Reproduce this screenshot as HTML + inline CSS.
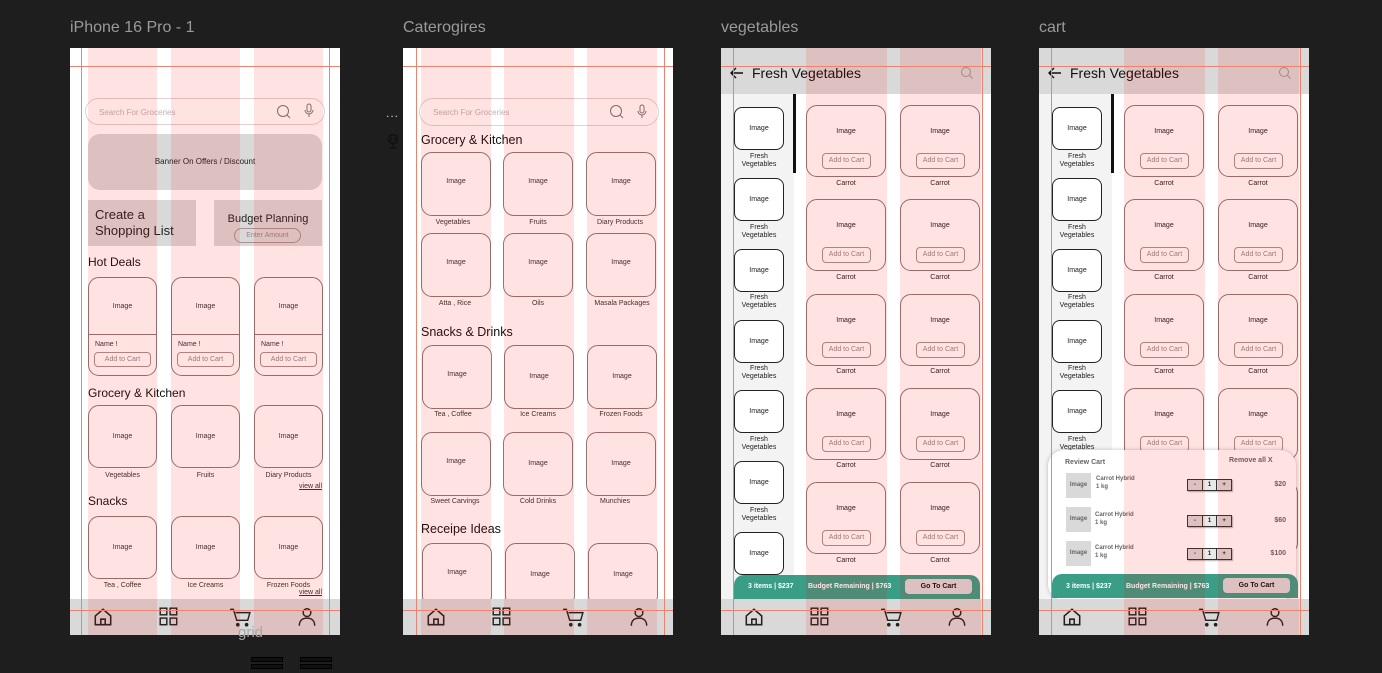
<!DOCTYPE html>
<html><head><meta charset="utf-8"><style>
*{margin:0;padding:0;box-sizing:border-box}
body{width:1382px;height:673px;background:#1e1e1e;position:relative;overflow:hidden;font-family:"Liberation Sans",sans-serif;color:#222}
.t{position:absolute;top:19px;font-size:16px;color:#9a9a9a}
.f{position:absolute;top:48px;width:270px;height:587px;background:#fff;overflow:hidden}
.a{position:absolute}
.col{position:absolute;top:0;height:587px;background:rgba(255,0,0,.11);z-index:20}
.vl{position:absolute;top:0;height:587px;width:1px;background:#ea8470;z-index:21}
.hl{position:absolute;left:0;width:270px;height:1px;background:#ea8470;z-index:21}
.card{position:absolute;border:1px solid #8e7676;border-radius:11px;font-size:7px;text-align:center;color:#333}
.lbl{position:absolute;font-size:7px;text-align:center;color:#333}
.h{position:absolute;font-size:12px;color:#111}
.pill{position:absolute;border:1px solid #aa9090;border-radius:4px;font-size:7px;color:#9a8585;text-align:center;line-height:13px}
.nav{position:absolute;left:0;top:551px;width:270px;height:36px;background:#d9d9d9;z-index:10}
.nav svg{position:absolute;top:9px;transform:scale(1.1)}
.sb{position:absolute;left:13px;width:50px;height:43px;border:1px solid #222;border-radius:8px;background:#fff;font-size:7px;text-align:center;line-height:42px}
.sbl{position:absolute;left:8px;width:60px;font-size:7px;text-align:center;line-height:8px}
.pc{position:absolute;width:80px;height:72px;border:1px solid #8e7676;border-radius:11px;font-size:7px;text-align:center}
.pc span{position:absolute;left:0;right:0;top:22px}
.pc i{position:absolute;left:15px;top:47px;width:49px;height:16px;border:1px solid #aa9090;border-radius:4px;font-style:normal;color:#9a8585;line-height:14px}
.pl{position:absolute;width:80px;font-size:7px;text-align:center}
.green{position:absolute;left:13px;top:527px;width:246px;height:24px;background:#3a9e86;border-radius:10px 10px 0 0;z-index:9;color:#fff;font-size:7px;font-weight:bold}
</style></head><body>
<div class="t" style="left:70px">iPhone 16 Pro - 1</div>
<div class="t" style="left:403px">Caterogires</div>
<div class="t" style="left:721px">vegetables</div>
<div class="t" style="left:1039px">cart</div>

<!-- FRAME 1 -->
<div class="f" style="left:70px">
<div class="col" style="left:18px;width:69px"></div><div class="col" style="left:101px;width:69px"></div><div class="col" style="left:184px;width:69px"></div>
<div class="vl" style="left:11px"></div><div class="vl" style="left:259px"></div>
<div class="hl" style="top:18px"></div><div class="hl" style="top:562px"></div>
<div class="a" style="left:15px;top:50px;width:240px;height:27px;border:1px solid #e3d0d0;border-radius:14px;font-size:8px;color:#c4b0b0;padding:9px 13px">Search For Groceries</div>
<svg class="a" style="left:206px;top:56px" width="16" height="16"><circle cx="7" cy="7" r="5.5" fill="none" stroke="#777" stroke-width="1"/><line x1="11" y1="11" x2="14" y2="14" stroke="#777"/></svg>
<svg class="a" style="left:234px;top:55px" width="10" height="16"><rect x="3" y="1" width="4" height="8" rx="2" fill="none" stroke="#777"/><path d="M1 7a4 4 0 0 0 8 0M5 11v3" fill="none" stroke="#777"/></svg>
<div class="a" style="left:18px;top:86px;width:234px;height:56px;background:#d9d9d9;border-radius:12px;font-size:8px;text-align:center;line-height:56px">Banner On Offers / Discount</div>
<div class="a" style="left:18px;top:152px;width:108px;height:46px;background:#d9d9d9;font-size:13px;padding:7px 7px;line-height:16px">Create a Shopping List</div>
<div class="a" style="left:144px;top:152px;width:108px;height:46px;background:#d9d9d9;font-size:11px;text-align:center;padding-top:13px">Budget Planning</div>
<div class="pill" style="left:164px;top:180px;width:67px;height:15px;border-radius:8px">Enter Amount</div>
<div class="h" style="left:18px;top:207px">Hot Deals</div>
<div class="card" style="left:18px;top:229px;width:69px;height:99px"><div class="a" style="left:0;right:0;top:25px">Image</div><div class="a" style="left:0;right:0;top:56px;border-top:1px solid #8e7676"></div><div class="a" style="left:6px;top:63px">Name !</div></div>
<div class="card" style="left:101px;top:229px;width:69px;height:99px"><div class="a" style="left:0;right:0;top:25px">Image</div><div class="a" style="left:0;right:0;top:56px;border-top:1px solid #8e7676"></div><div class="a" style="left:6px;top:63px">Name !</div></div>
<div class="card" style="left:184px;top:229px;width:69px;height:99px"><div class="a" style="left:0;right:0;top:25px">Image</div><div class="a" style="left:0;right:0;top:56px;border-top:1px solid #8e7676"></div><div class="a" style="left:6px;top:63px">Name !</div></div>
<div class="pill" style="left:24px;top:304px;width:57px;height:15px">Add to Cart</div>
<div class="pill" style="left:107px;top:304px;width:57px;height:15px">Add to Cart</div>
<div class="pill" style="left:190px;top:304px;width:57px;height:15px">Add to Cart</div>
<div class="h" style="left:18px;top:338px">Grocery &amp; Kitchen</div>
<div class="card" style="left:18px;top:357px;width:69px;height:63px;line-height:61px">Image</div>
<div class="card" style="left:101px;top:357px;width:69px;height:63px;line-height:61px">Image</div>
<div class="card" style="left:184px;top:357px;width:69px;height:63px;line-height:61px">Image</div>
<div class="lbl" style="left:18px;top:424px;width:69px">Vegetables</div>
<div class="lbl" style="left:101px;top:424px;width:69px">Fruits</div>
<div class="lbl" style="left:184px;top:424px;width:69px">Diary Products</div>
<div class="lbl" style="left:220px;top:435px;width:32px;text-decoration:underline;text-align:right">view all</div>
<div class="h" style="left:18px;top:446px">Snacks</div>
<div class="card" style="left:18px;top:468px;width:69px;height:63px;line-height:61px">Image</div>
<div class="card" style="left:101px;top:468px;width:69px;height:63px;line-height:61px">Image</div>
<div class="card" style="left:184px;top:468px;width:69px;height:63px;line-height:61px">Image</div>
<div class="lbl" style="left:18px;top:534px;width:69px">Tea , Coffee</div>
<div class="lbl" style="left:101px;top:534px;width:69px">Ice Creams</div>
<div class="lbl" style="left:184px;top:534px;width:69px">Frozen Foods</div>
<div class="lbl" style="left:220px;top:541px;width:32px;text-decoration:underline;text-align:right">view all</div>
<div class="nav">
<svg style="left:24px" width="18" height="18" fill="none" stroke="#222" stroke-width="1.4"><path d="M2 8L9 2l7 6v8H2z M7 16v-5h4v5"/></svg>
<svg style="left:90px" width="18" height="18" fill="none" stroke="#222" stroke-width="1.3"><rect x="1" y="1" width="6" height="6"/><rect x="10" y="1" width="6" height="6"/><rect x="1" y="10" width="6" height="6"/><rect x="10" y="10" width="6" height="6"/></svg>
<svg style="left:160px" width="20" height="18" fill="none" stroke="#222" stroke-width="1.3"><path d="M1 2h3l3 10h10l2-7H6"/><circle cx="8" cy="16" r="1" fill="#222"/><circle cx="16" cy="16" r="1" fill="#222"/></svg>
<svg style="left:228px" width="18" height="18" fill="none" stroke="#222" stroke-width="1.3"><circle cx="9" cy="5" r="3.5"/><path d="M2 17c0-5 3-7 7-7s7 2 7 7"/></svg>
</div>
</div>
<div class="a" style="left:238px;top:624px;font-size:15px;color:#a8a8a8;z-index:50">grid</div>
<div class="a" style="left:251px;top:657px;width:32px;height:5px;border:1px solid #000;background:#111"></div>
<div class="a" style="left:251px;top:664px;width:32px;height:5px;border:1px solid #000;background:#111"></div>
<div class="a" style="left:300px;top:657px;width:32px;height:5px;border:1px solid #000;background:#111"></div>
<div class="a" style="left:300px;top:664px;width:32px;height:5px;border:1px solid #000;background:#111"></div>
<div class="a" style="left:386px;top:106px;font-size:12px;color:#ccc;letter-spacing:1px">...</div>
<svg class="a" style="left:386px;top:133px" width="14" height="16" fill="none" stroke="#111" stroke-width="1.5"><circle cx="7" cy="6" r="4.5"/><path d="M7 11v4M3 15h8M5 4v4M9 4v4"/></svg>

<!-- FRAME 2 -->
<div class="f" style="left:403px">
<div class="col" style="left:18px;width:70px"></div><div class="col" style="left:101px;width:70px"></div><div class="col" style="left:184px;width:70px"></div>
<div class="vl" style="left:13px"></div><div class="vl" style="left:261px"></div>
<div class="hl" style="top:18px"></div><div class="hl" style="top:562px"></div>
<div class="a" style="left:16px;top:50px;width:240px;height:28px;border:1px solid #e3d0d0;border-radius:14px;font-size:8px;color:#c4b0b0;padding:9px 13px">Search For Groceries</div>
<svg class="a" style="left:206px;top:56px" width="16" height="16"><circle cx="7" cy="7" r="5.5" fill="none" stroke="#777"/><line x1="11" y1="11" x2="14" y2="14" stroke="#777"/></svg>
<svg class="a" style="left:234px;top:56px" width="10" height="16"><rect x="3" y="1" width="4" height="8" rx="2" fill="none" stroke="#777"/><path d="M1 7a4 4 0 0 0 8 0M5 11v3" fill="none" stroke="#777"/></svg>
<div class="h" style="left:18px;top:85px;font-size:12.5px">Grocery &amp; Kitchen</div>
<div class="card" style="left:18px;top:104px;width:70px;height:64px;line-height:58px">Image</div>
<div class="card" style="left:100px;top:104px;width:70px;height:64px;line-height:58px">Image</div>
<div class="card" style="left:183px;top:104px;width:70px;height:64px;line-height:58px">Image</div>
<div class="lbl" style="left:10px;top:171px;width:80px">Vegetables</div>
<div class="lbl" style="left:95px;top:171px;width:80px">Fruits</div>
<div class="lbl" style="left:177px;top:171px;width:80px">Diary Products</div>
<div class="card" style="left:18px;top:185px;width:70px;height:64px;line-height:58px">Image</div>
<div class="card" style="left:100px;top:185px;width:70px;height:64px;line-height:58px">Image</div>
<div class="card" style="left:183px;top:185px;width:70px;height:64px;line-height:58px">Image</div>
<div class="lbl" style="left:12px;top:252px;width:80px">Atta , Rice</div>
<div class="lbl" style="left:95px;top:252px;width:80px">Oils</div>
<div class="lbl" style="left:179px;top:252px;width:80px">Masala Packages</div>
<div class="h" style="left:18px;top:277px;font-size:12.5px">Snacks &amp; Drinks</div>
<div class="card" style="left:19px;top:297px;width:70px;height:64px;line-height:58px">Image</div>
<div class="card" style="left:101px;top:297px;width:70px;height:64px;line-height:62px">Image</div>
<div class="card" style="left:184px;top:297px;width:70px;height:64px;line-height:62px">Image</div>
<div class="lbl" style="left:10px;top:363px;width:80px">Tea , Coffee</div>
<div class="lbl" style="left:95px;top:363px;width:80px">Ice Creams</div>
<div class="lbl" style="left:178px;top:363px;width:80px">Frozen Foods</div>
<div class="card" style="left:18px;top:384px;width:70px;height:64px;line-height:58px">Image</div>
<div class="card" style="left:100px;top:384px;width:70px;height:64px;line-height:62px">Image</div>
<div class="card" style="left:183px;top:384px;width:70px;height:64px;line-height:62px">Image</div>
<div class="lbl" style="left:12px;top:450px;width:80px">Sweet Carvings</div>
<div class="lbl" style="left:95px;top:450px;width:80px">Cold Drinks</div>
<div class="lbl" style="left:172px;top:450px;width:80px">Munchies</div>
<div class="h" style="left:18px;top:474px;font-size:12.5px">Receipe Ideas</div>
<div class="card" style="left:19px;top:495px;width:70px;height:64px;line-height:58px">Image</div>
<div class="card" style="left:102px;top:495px;width:70px;height:64px;line-height:62px">Image</div>
<div class="card" style="left:185px;top:495px;width:70px;height:64px;line-height:62px">Image</div>
<div class="nav">
<svg style="left:24px" width="18" height="18" fill="none" stroke="#222" stroke-width="1.4"><path d="M2 8L9 2l7 6v8H2z M7 16v-5h4v5"/></svg>
<svg style="left:90px" width="18" height="18" fill="none" stroke="#222" stroke-width="1.3"><rect x="1" y="1" width="6" height="6"/><rect x="10" y="1" width="6" height="6"/><rect x="1" y="10" width="6" height="6"/><rect x="10" y="10" width="6" height="6"/></svg>
<svg style="left:160px" width="20" height="18" fill="none" stroke="#222" stroke-width="1.3"><path d="M1 2h3l3 10h10l2-7H6"/><circle cx="8" cy="16" r="1" fill="#222"/><circle cx="16" cy="16" r="1" fill="#222"/></svg>
<svg style="left:227px" width="18" height="18" fill="none" stroke="#222" stroke-width="1.3"><circle cx="9" cy="5" r="3.5"/><path d="M2 17c0-5 3-7 7-7s7 2 7 7"/></svg>
</div>
</div>

<!-- FRAME 3 -->
<div class="f" style="left:721px">
<div class="a" style="left:0;top:0;width:270px;height:46px;background:#d9d9d9"></div>
<div class="a" style="left:0;top:46px;width:73px;height:505px;background:#f3f3f3"></div>
<div class="a" style="left:72px;top:46px;width:3px;height:79px;background:#111"></div>
<div class="col" style="left:85px;width:81px"></div><div class="col" style="left:179px;width:81px"></div>
<div class="vl" style="left:12px"></div><div class="vl" style="left:261px"></div>
<div class="hl" style="top:18px"></div><div class="hl" style="top:562px"></div>
<svg class="a" style="left:9px;top:19px" width="14" height="12" fill="none" stroke="#111" stroke-width="1.4"><path d="M13 6H2M6 1L1 6l5 5"/></svg>
<div class="a" style="left:31px;top:17px;font-size:14px;color:#111">Fresh Vegetables</div>
<svg class="a" style="left:239px;top:18px" width="13" height="13" fill="none" stroke="#999"><circle cx="6" cy="6" r="4.5"/><path d="M9.5 9.5l3 3"/></svg>
<div class="sb" style="top:59px">Image</div><div class="sbl" style="top:105px">Fresh<br>Vegetables</div>
<div class="sb" style="top:130px">Image</div><div class="sbl" style="top:176px">Fresh<br>Vegetables</div>
<div class="sb" style="top:201px">Image</div><div class="sbl" style="top:246px">Fresh<br>Vegetables</div>
<div class="sb" style="top:272px">Image</div><div class="sbl" style="top:317px">Fresh<br>Vegetables</div>
<div class="sb" style="top:342px">Image</div><div class="sbl" style="top:388px">Fresh<br>Vegetables</div>
<div class="sb" style="top:413px">Image</div><div class="sbl" style="top:459px">Fresh<br>Vegetables</div>
<div class="sb" style="top:484px">Image</div>
<div class="pc" style="left:85px;top:57px"><span>Image</span><i>Add to Cart</i></div><div class="pc" style="left:179px;top:57px"><span>Image</span><i>Add to Cart</i></div>
<div class="pl" style="left:85px;top:132px">Carrot</div><div class="pl" style="left:179px;top:132px">Carrot</div>
<div class="pc" style="left:85px;top:151px"><span>Image</span><i>Add to Cart</i></div><div class="pc" style="left:179px;top:151px"><span>Image</span><i>Add to Cart</i></div>
<div class="pl" style="left:85px;top:226px">Carrot</div><div class="pl" style="left:179px;top:226px">Carrot</div>
<div class="pc" style="left:85px;top:246px"><span>Image</span><i>Add to Cart</i></div><div class="pc" style="left:179px;top:246px"><span>Image</span><i>Add to Cart</i></div>
<div class="pl" style="left:85px;top:320px">Carrot</div><div class="pl" style="left:179px;top:320px">Carrot</div>
<div class="pc" style="left:85px;top:340px"><span>Image</span><i>Add to Cart</i></div><div class="pc" style="left:179px;top:340px"><span>Image</span><i>Add to Cart</i></div>
<div class="pl" style="left:85px;top:414px">Carrot</div><div class="pl" style="left:179px;top:414px">Carrot</div>
<div class="pc" style="left:85px;top:434px"><span>Image</span><i>Add to Cart</i></div><div class="pc" style="left:179px;top:434px"><span>Image</span><i>Add to Cart</i></div>
<div class="pl" style="left:85px;top:509px">Carrot</div><div class="pl" style="left:179px;top:509px">Carrot</div>
<div class="green"><span class="a" style="left:14px;top:8px">3 items | $237</span><span class="a" style="left:74px;top:8px">Budget Remaining | $763</span><span class="a" style="left:171px;top:4px;width:67px;height:15px;background:#d9d9d9;border-radius:4px;color:#111;text-align:center;line-height:15px">Go To Cart</span></div>
<div class="nav">
<svg style="left:24px" width="18" height="18" fill="none" stroke="#222" stroke-width="1.4"><path d="M2 8L9 2l7 6v8H2z M7 16v-5h4v5"/></svg>
<svg style="left:90px" width="18" height="18" fill="none" stroke="#222" stroke-width="1.3"><rect x="1" y="1" width="6" height="6"/><rect x="10" y="1" width="6" height="6"/><rect x="1" y="10" width="6" height="6"/><rect x="10" y="10" width="6" height="6"/></svg>
<svg style="left:160px" width="20" height="18" fill="none" stroke="#222" stroke-width="1.3"><path d="M1 2h3l3 10h10l2-7H6"/><circle cx="8" cy="16" r="1" fill="#222"/><circle cx="16" cy="16" r="1" fill="#222"/></svg>
<svg style="left:227px" width="18" height="18" fill="none" stroke="#222" stroke-width="1.3"><circle cx="9" cy="5" r="3.5"/><path d="M2 17c0-5 3-7 7-7s7 2 7 7"/></svg>
</div>
</div>

<!-- FRAME 4 -->
<div class="f" style="left:1039px">
<div class="a" style="left:0;top:0;width:270px;height:46px;background:#d9d9d9"></div>
<div class="a" style="left:0;top:46px;width:73px;height:505px;background:#f3f3f3"></div>
<div class="a" style="left:72px;top:46px;width:3px;height:79px;background:#111"></div>
<div class="col" style="left:85px;width:81px"></div><div class="col" style="left:179px;width:81px"></div>
<div class="vl" style="left:12px"></div><div class="vl" style="left:261px"></div>
<div class="hl" style="top:18px"></div><div class="hl" style="top:562px"></div>
<svg class="a" style="left:9px;top:19px" width="14" height="12" fill="none" stroke="#111" stroke-width="1.4"><path d="M13 6H2M6 1L1 6l5 5"/></svg>
<div class="a" style="left:31px;top:17px;font-size:14px;color:#111">Fresh Vegetables</div>
<svg class="a" style="left:239px;top:18px" width="13" height="13" fill="none" stroke="#999"><circle cx="6" cy="6" r="4.5"/><path d="M9.5 9.5l3 3"/></svg>
<div class="sb" style="top:59px">Image</div><div class="sbl" style="top:105px">Fresh<br>Vegetables</div>
<div class="sb" style="top:130px">Image</div><div class="sbl" style="top:176px">Fresh<br>Vegetables</div>
<div class="sb" style="top:201px">Image</div><div class="sbl" style="top:246px">Fresh<br>Vegetables</div>
<div class="sb" style="top:272px">Image</div><div class="sbl" style="top:317px">Fresh<br>Vegetables</div>
<div class="sb" style="top:342px">Image</div><div class="sbl" style="top:388px">Fresh<br>Vegetables</div>
<div class="pc" style="left:85px;top:57px"><span>Image</span><i>Add to Cart</i></div><div class="pc" style="left:179px;top:57px"><span>Image</span><i>Add to Cart</i></div>
<div class="pl" style="left:85px;top:132px">Carrot</div><div class="pl" style="left:179px;top:132px">Carrot</div>
<div class="pc" style="left:85px;top:151px"><span>Image</span><i>Add to Cart</i></div><div class="pc" style="left:179px;top:151px"><span>Image</span><i>Add to Cart</i></div>
<div class="pl" style="left:85px;top:226px">Carrot</div><div class="pl" style="left:179px;top:226px">Carrot</div>
<div class="pc" style="left:85px;top:246px"><span>Image</span><i>Add to Cart</i></div><div class="pc" style="left:179px;top:246px"><span>Image</span><i>Add to Cart</i></div>
<div class="pl" style="left:85px;top:320px">Carrot</div><div class="pl" style="left:179px;top:320px">Carrot</div>
<div class="pc" style="left:85px;top:340px"><span>Image</span><i>Add to Cart</i></div><div class="pc" style="left:179px;top:340px"><span>Image</span><i>Add to Cart</i></div>
<div class="pc" style="left:179px;top:434px"></div>
<div class="a" style="left:9px;top:402px;width:248px;height:150px;background:#fff;border-radius:16px;box-shadow:0 0 4px rgba(0,0,0,.25);z-index:8;font-size:7px;font-weight:bold;color:#666">
<span class="a" style="left:17px;top:9px">Review Cart</span><span class="a" style="left:181px;top:7px">Remove all X</span>
<div class="a" style="left:18px;top:23px;width:25px;height:25px;background:#d9d9d9;line-height:25px;text-align:center;font-size:6px">Image</div>
<div class="a" style="left:18px;top:57px;width:25px;height:25px;background:#d9d9d9;line-height:25px;text-align:center;font-size:6px">Image</div>
<div class="a" style="left:18px;top:91px;width:25px;height:25px;background:#d9d9d9;line-height:25px;text-align:center;font-size:6px">Image</div>
<span class="a" style="left:48px;top:25px;font-size:6px;line-height:8px">Carrot Hybrid<br>1 kg</span>
<span class="a" style="left:47px;top:61px;font-size:6px;line-height:8px">Carrot Hybrid<br>1 kg</span>
<span class="a" style="left:47px;top:94px;font-size:6px;line-height:8px">Carrot Hybrid<br>1 kg</span>
<div class="a" style="left:139px;top:29px;width:45px;height:12px;border:1px solid #333;display:flex;color:#222;font-size:6px;line-height:10px;text-align:center;box-shadow:1px 1px 1px rgba(0,0,0,.3)"><span style="flex:1;background:#d9d9d9">-</span><span style="flex:1;border-left:1px solid #333;border-right:1px solid #333;background:#e9e9e9">1</span><span style="flex:1;background:#d9d9d9">+</span></div>
<div class="a" style="left:139px;top:65px;width:45px;height:12px;border:1px solid #333;display:flex;color:#222;font-size:6px;line-height:10px;text-align:center;box-shadow:1px 1px 1px rgba(0,0,0,.3)"><span style="flex:1;background:#d9d9d9">-</span><span style="flex:1;border-left:1px solid #333;border-right:1px solid #333;background:#e9e9e9">1</span><span style="flex:1;background:#d9d9d9">+</span></div>
<div class="a" style="left:139px;top:98px;width:45px;height:12px;border:1px solid #333;display:flex;color:#222;font-size:6px;line-height:10px;text-align:center;box-shadow:1px 1px 1px rgba(0,0,0,.3)"><span style="flex:1;background:#d9d9d9">-</span><span style="flex:1;border-left:1px solid #333;border-right:1px solid #333;background:#e9e9e9">1</span><span style="flex:1;background:#d9d9d9">+</span></div>
<span class="a" style="right:10px;top:31px">$20</span><span class="a" style="right:10px;top:67px">$60</span><span class="a" style="right:10px;top:100px">$100</span>
</div>
<div class="green" style="top:526px;left:13px"><span class="a" style="left:14px;top:9px">3 items | $237</span><span class="a" style="left:74px;top:9px">Budget Remaining | $763</span><span class="a" style="left:171px;top:4px;width:67px;height:15px;background:#d9d9d9;border-radius:4px;color:#111;text-align:center;line-height:15px">Go To Cart</span></div>
<div class="nav">
<svg style="left:24px" width="18" height="18" fill="none" stroke="#222" stroke-width="1.4"><path d="M2 8L9 2l7 6v8H2z M7 16v-5h4v5"/></svg>
<svg style="left:90px" width="18" height="18" fill="none" stroke="#222" stroke-width="1.3"><rect x="1" y="1" width="6" height="6"/><rect x="10" y="1" width="6" height="6"/><rect x="1" y="10" width="6" height="6"/><rect x="10" y="10" width="6" height="6"/></svg>
<svg style="left:160px" width="20" height="18" fill="none" stroke="#222" stroke-width="1.3"><path d="M1 2h3l3 10h10l2-7H6"/><circle cx="8" cy="16" r="1" fill="#222"/><circle cx="16" cy="16" r="1" fill="#222"/></svg>
<svg style="left:227px" width="18" height="18" fill="none" stroke="#222" stroke-width="1.3"><circle cx="9" cy="5" r="3.5"/><path d="M2 17c0-5 3-7 7-7s7 2 7 7"/></svg>
</div>
</div>
</body></html>
